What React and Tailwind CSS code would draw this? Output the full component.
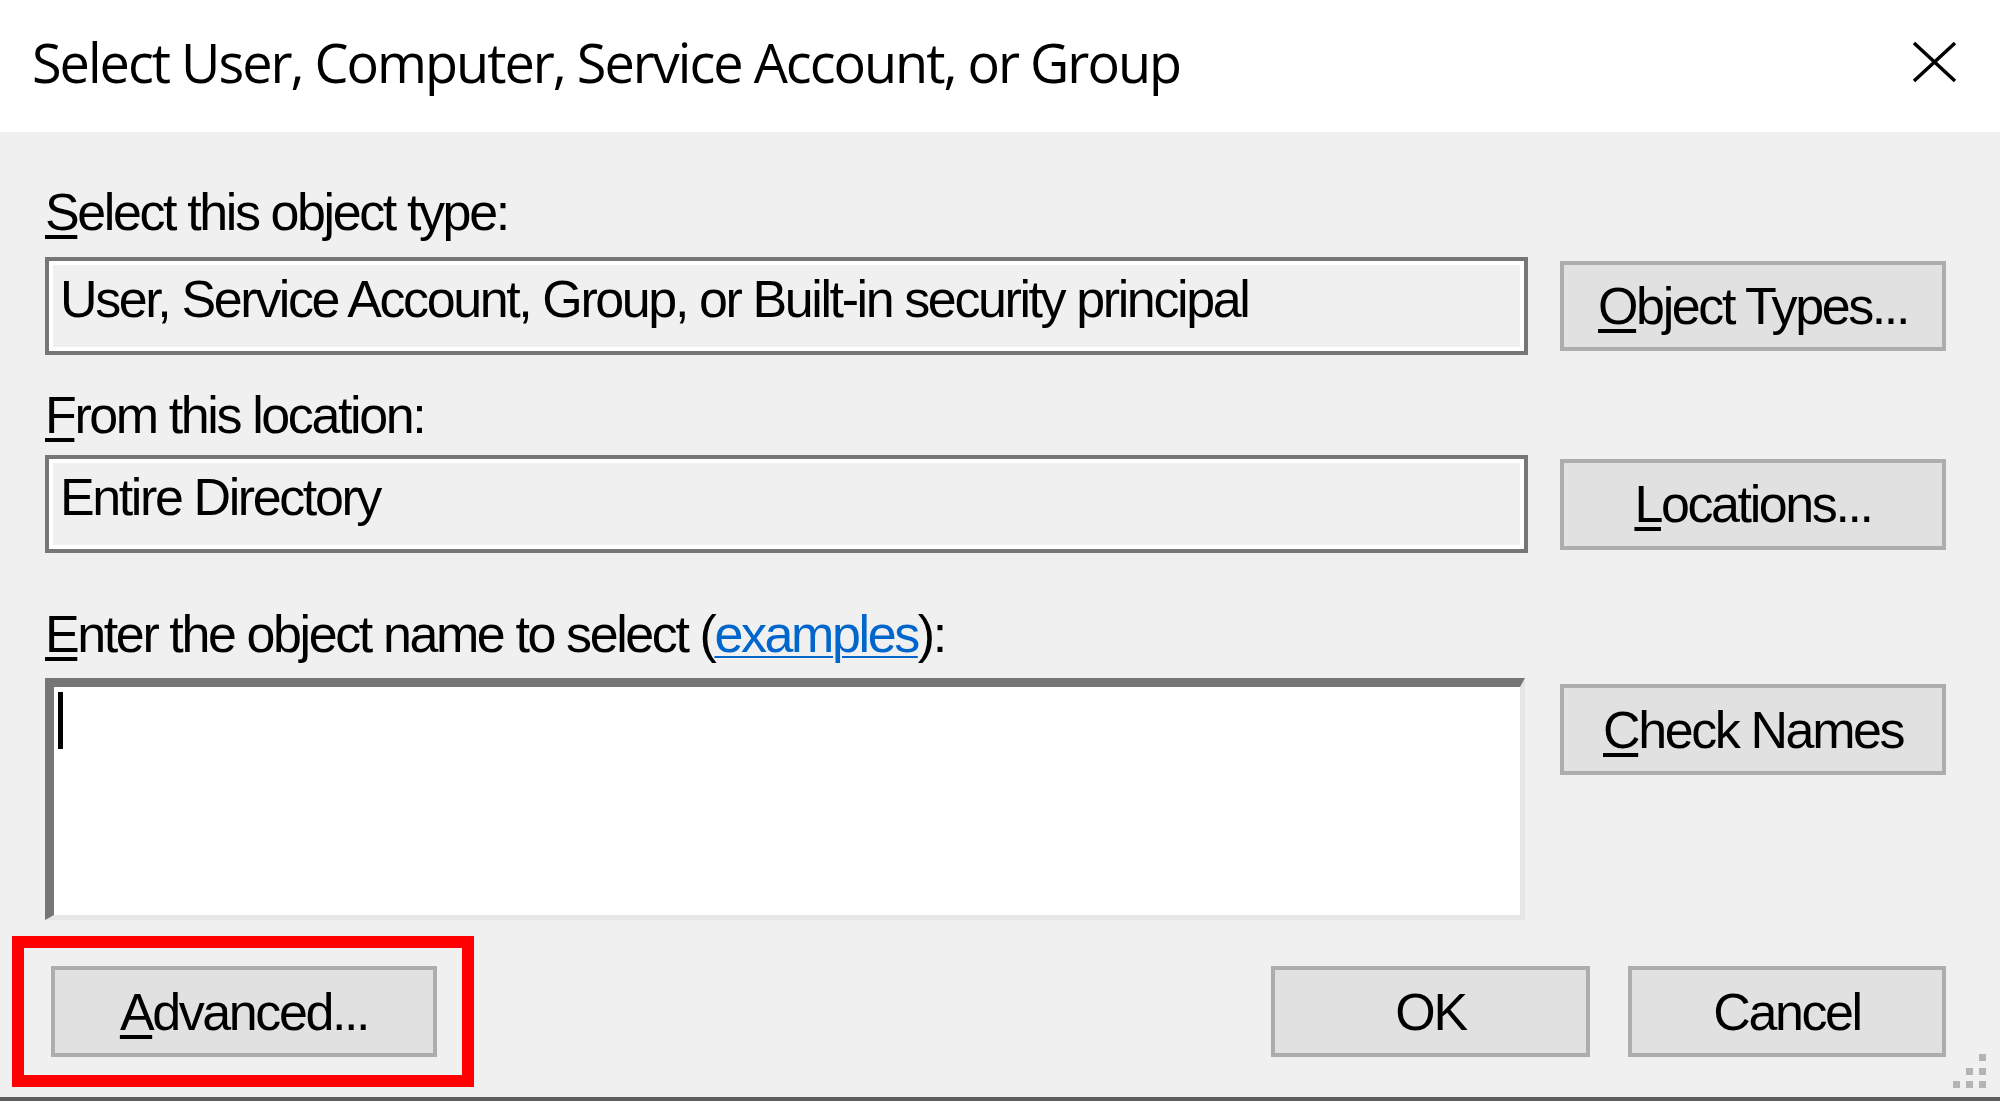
import React from 'react';

const sans = "font-['Liberation_Sans',Arial,sans-serif]";

// Underlined access-key letter, like a Win32 mnemonic
function Key({ children }) {
  return (
    <span className="underline decoration-[4px] underline-offset-[5px] decoration-black">{children}</span>
  );
}

function WinButton({ className = '', children }) {
  return (
    <div
      className={`flex items-center justify-center bg-[#e1e1e1] border-[4px] border-[#adadad] text-black ${className}`}
    >
      <span className="leading-[60px]">{children}</span>
    </div>
  );
}

function ReadOnlyBox({ children }) {
  return (
    <div className="w-[1483px] h-[98px] border-[4px] border-[#767676]">
      <div className="h-full border-[4px] border-white bg-[#f0f0f0] pl-[7px] pt-[4px] leading-[60px] text-black whitespace-nowrap">
        {children}
      </div>
    </div>
  );
}

export default function App() {
  return (
    <div className={`relative w-[2000px] h-[1101px] bg-[#f0f0f0] flex flex-col overflow-hidden ${sans} text-[52px] tracking-[-2.4px]`}>

      {/* Title bar */}
      <div className="h-[132px] bg-white flex items-start shrink-0">
        <div className="ml-[32px] mt-[35px] font-['Open_Sans',sans-serif] text-[54px] leading-[54px] tracking-[-2px] text-black whitespace-nowrap">
          Select User, Computer, Service Account, or Group
        </div>
        <svg className="ml-auto mr-[43px] mt-[41px]" width="45" height="42" viewBox="0 0 45 42">
          <path d="M2 2 L43 40 M43 2 L2 40" stroke="#000" strokeWidth="3.5" fill="none" />
        </svg>
      </div>

      {/* Body */}
      <div className="flex-1 flex flex-col pl-[45px] pr-[54px]">
        <div className="mt-[50px] h-[60px] leading-[60px] text-black">
          <Key>S</Key>elect this object type:
        </div>
        <div className="mt-[15px] flex items-center gap-[32px]">
          <ReadOnlyBox>User, Service Account, Group, or Built-in security principal</ReadOnlyBox>
          <WinButton className="w-[386px] h-[90px]">
            <Key>O</Key>bject Types...
          </WinButton>
        </div>

        <div className="mt-[30px] h-[60px] leading-[60px] text-black">
          <Key>F</Key>rom this location:
        </div>
        <div className="mt-[10px] flex items-center gap-[32px]">
          <ReadOnlyBox>Entire Directory</ReadOnlyBox>
          <WinButton className="w-[386px] h-[91px]">
            <Key>L</Key>ocations...
          </WinButton>
        </div>

        <div className="mt-[51px] h-[60px] leading-[60px] text-black whitespace-nowrap">
          <Key>E</Key>nter the object name to select (
          <span className="text-[#0066cc] underline decoration-[2px] underline-offset-[4px]">examples</span>
          ):
        </div>
        <div className="mt-[14px] flex items-start gap-[35px]">
          <div className="w-[1481px] h-[242px] bg-white border-t-[9px] border-l-[9px] border-t-[#767676] border-l-[#767676] border-r-[5px] border-b-[5px] border-r-[#e6e6e6] border-b-[#e6e6e6]">
            <div className="ml-[4px] mt-[5px] w-[5px] h-[57px] bg-black" />
          </div>
          <WinButton className="mt-[6px] w-[386px] h-[91px]">
            <Key>C</Key>heck Names
          </WinButton>
        </div>

        <div className="mt-[46px] flex items-start">
          <WinButton className="ml-[6px] w-[386px] h-[91px]">
            <Key>A</Key>dvanced...
          </WinButton>
          <WinButton className="ml-auto w-[319px] h-[91px]">OK</WinButton>
          <WinButton className="ml-[38px] w-[318px] h-[91px]">Cancel</WinButton>
        </div>
      </div>

      {/* Window bottom edge */}
      <div className="h-[4px] bg-[#5e5e5e] shrink-0" />

      {/* Annotation around Advanced */}
      <div className="absolute left-[12px] top-[936px] w-[462px] h-[151px] border-[12px] border-[#ff0000]" />

      {/* Size grip */}
      <svg className="absolute left-[1952px] top-[1053px]" width="36" height="36" viewBox="0 0 36 36">
        <rect x="27" y="1" width="7" height="7" fill="#b4b4b4" />
        <rect x="14" y="15" width="7" height="7" fill="#b4b4b4" />
        <rect x="27" y="15" width="7" height="7" fill="#b4b4b4" />
        <rect x="1" y="28" width="7" height="7" fill="#b4b4b4" />
        <rect x="14" y="28" width="7" height="7" fill="#b4b4b4" />
        <rect x="27" y="28" width="7" height="7" fill="#b4b4b4" />
      </svg>
    </div>
  );
}
